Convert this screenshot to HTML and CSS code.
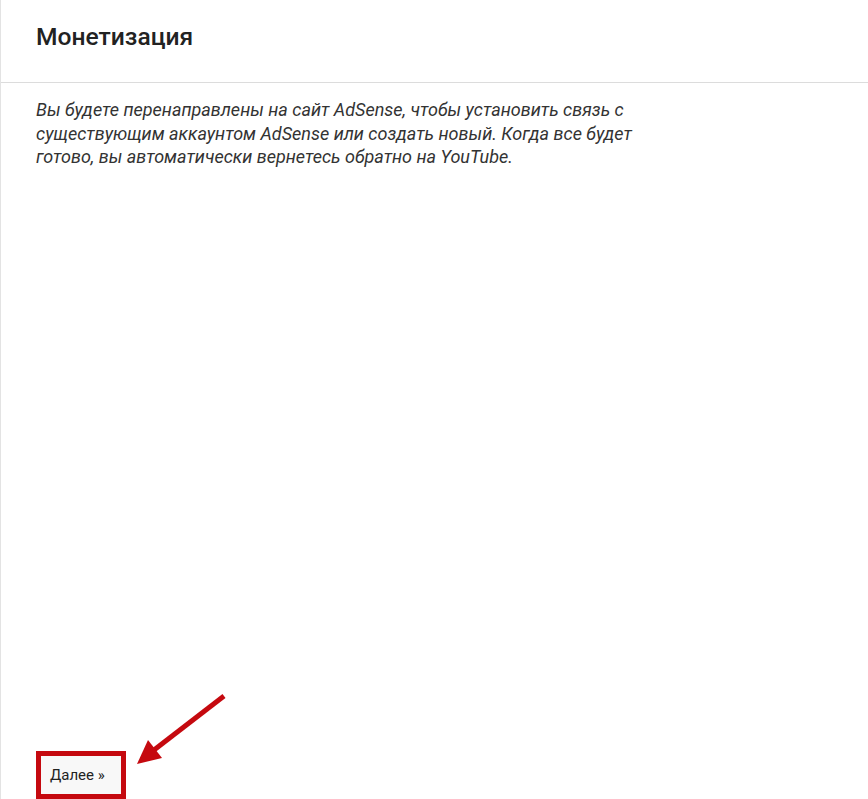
FILE: index.html
```html
<!DOCTYPE html>
<html lang="ru">
<head>
<meta charset="utf-8">
<title>Монетизация</title>
<link rel="stylesheet" href="styles.css">
</head>
<body>
<div class="page">
  <header class="header">
    <h1 class="title">Монетизация</h1>
  </header>
  <main class="content">
    <p class="note">Вы будете перенаправлены на сайт AdSense, чтобы установить связь с существующим аккаунтом AdSense или создать новый. Когда все будет готово, вы автоматически вернетесь обратно на YouTube.</p>
  </main>
  <footer class="footer">
    <div class="highlight">
      <button class="next-btn" type="button">Далее »</button>
    </div>
  </footer>
  <svg class="arrow" width="868" height="799" viewBox="0 0 868 799" aria-hidden="true">
    <line x1="224" y1="696" x2="154" y2="750" stroke="#c5090f" stroke-width="5" stroke-linecap="butt"/>
    <polygon points="137,764 148,740 162,758" fill="#c5090f"/>
  </svg>
</div>
</body>
</html>
```
FILE: styles.css
```css
html, body {
  margin: 0;
  padding: 0;
  background: #ffffff;
}

body {
  font-family: Roboto, "Liberation Sans", Arial, sans-serif;
  color: #333333;
}

.page {
  position: relative;
  height: 799px;
  box-sizing: border-box;
  border-left: 1px solid #e3e3e3;
  display: flex;
  flex-direction: column;
  overflow: hidden;
}

.header {
  height: 83px;
  box-sizing: border-box;
  border-bottom: 1px solid #dcdcdc;
  padding: 23px 0 0 35px;
}

.title {
  margin: 0;
  font-size: 24.6px;
  line-height: 28px;
  font-weight: 500;
  color: #222222;
}

.content {
  padding: 15px 0 0 35px;
  flex: 1;
}

.note {
  margin: 0;
  max-width: 600px;
  font-size: 18px;
  line-height: 23.5px;
  font-style: italic;
  color: #333333;
}

.footer {
  padding-left: 35px;
}

.highlight {
  display: inline-block;
  border: 5px solid #c5090f;
  background: #f8f8f8;
}

.next-btn {
  display: block;
  width: 80px;
  height: 38px;
  box-sizing: border-box;
  padding: 0 0 0 9px;
  margin: 0;
  border: none;
  background: #f8f8f8;
  text-align: left;
  font-family: Roboto, "Liberation Sans", Arial, sans-serif;
  font-size: 15px;
  font-weight: 400;
  color: #222222;
  cursor: pointer;
}

.arrow {
  position: absolute;
  left: -1px;
  top: 0;
  pointer-events: none;
}
```
